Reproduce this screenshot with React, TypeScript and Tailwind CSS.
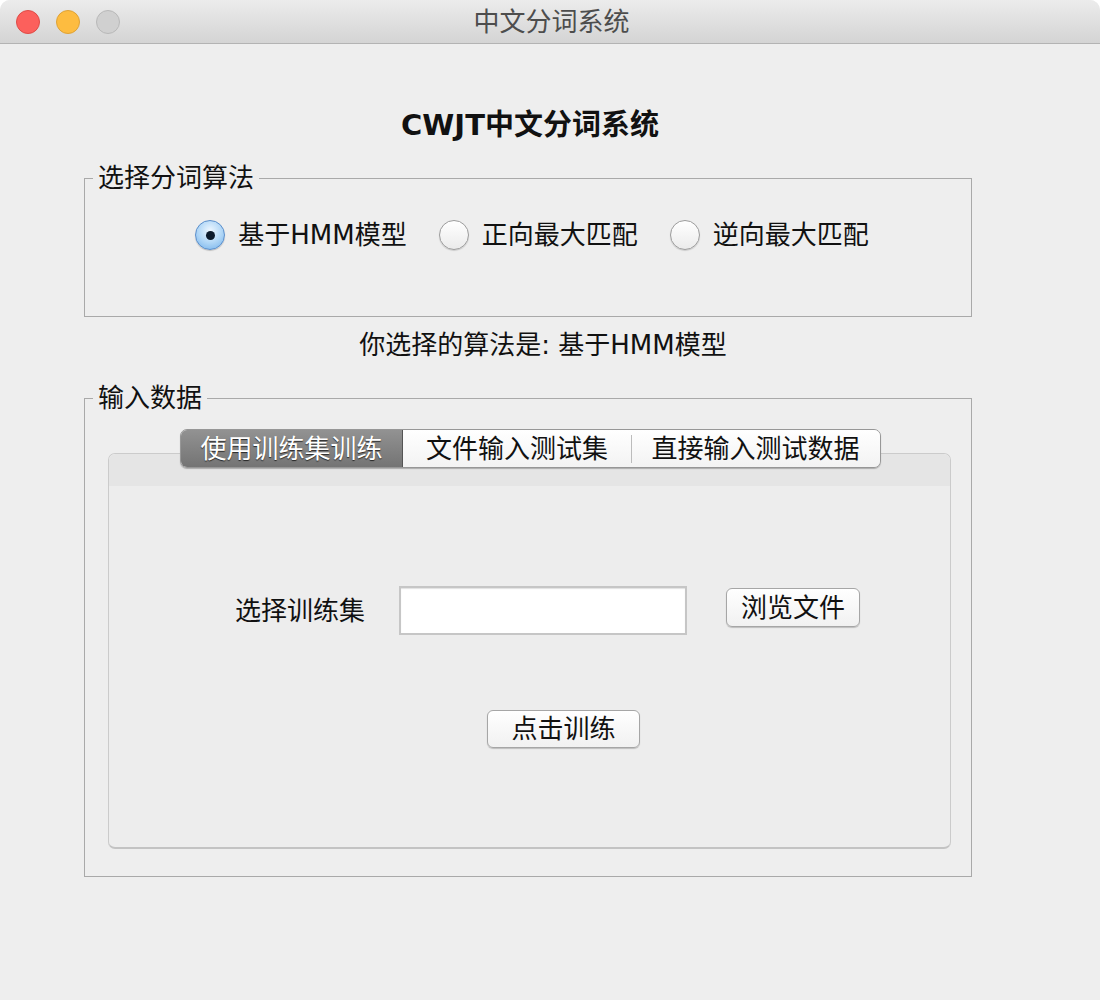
import React, { useState } from 'react';

const algorithms = ['基于HMM模型', '正向最大匹配', '逆向最大匹配'];

const tabs = [
  { label: '使用训练集训练', width: 'w-[222px]' },
  { label: '文件输入测试集', width: 'w-[228px]' },
  { label: '直接输入测试数据', width: 'w-[249px]' },
];

function Radio({ checked }: { checked: boolean }) {
  if (checked) {
    return (
      <span className="w-[30px] h-[30px] rounded-full border border-[#5b8fcc] bg-[radial-gradient(circle_at_50%_35%,#eef7ff_0%,#b3d8f7_50%,#72b0ea_100%)] shadow-[0_1px_1px_rgba(0,0,0,0.2)] flex items-center justify-center shrink-0">
        <span className="w-[9px] h-[9px] rounded-full bg-[#0d1b2c]" />
      </span>
    );
  }
  return (
    <span className="w-[30px] h-[30px] rounded-full border border-[#9c9c9c] bg-gradient-to-b from-white to-[#ebebeb] shadow-[0_1px_1px_rgba(0,0,0,0.15)] shrink-0" />
  );
}

function MacButton({ children, className = '' }: { children: React.ReactNode; className?: string }) {
  return (
    <button
      className={`rounded-[6px] border border-[#a6a6a6] bg-gradient-to-b from-white to-[#f1f1f1] shadow-[0_1px_1px_rgba(0,0,0,0.2)] text-[26px] leading-none text-[#111] flex items-center justify-center ${className}`}
    >
      {children}
    </button>
  );
}

export default function App() {
  const [algo, setAlgo] = useState(0);
  const [tab, setTab] = useState(0);

  return (
    <div className="w-[1100px] h-[1000px] bg-[#eeeeee] rounded-t-[10px] overflow-hidden font-['DejaVu_Sans','Noto_Sans_CJK_SC',sans-serif] text-[#111]">
      {/* window title bar */}
      <div className="h-[44px] relative flex items-center bg-gradient-to-b from-[#ececec] to-[#d4d4d4] border-b border-[#b3b3b3]">
        <div className="flex items-center gap-[16px] pl-[16px]">
          <span className="w-[24px] h-[24px] rounded-full bg-[#fc605c] border border-[#de4b46]" />
          <span className="w-[24px] h-[24px] rounded-full bg-[#fdbc40] border border-[#dea236]" />
          <span className="w-[24px] h-[24px] rounded-full bg-[#d0d0d0] border border-[#b8b8b8]" />
        </div>
        <div className="absolute inset-0 flex items-center justify-center text-[26px] leading-none text-[#4d4d4d] pl-[3px]">
          中文分词系统
        </div>
      </div>

      <h1 className="mt-[64px] text-center text-[29px] leading-[35px] font-bold text-[#111] pr-[40px]">
        CWJT中文分词系统
      </h1>

      {/* algorithm group */}
      <fieldset className="mt-[22px] ml-[84px] w-[888px] border border-[#a9a9a9]">
        <legend className="ml-[8px] px-[5px] text-[26px] leading-[26px]">选择分词算法</legend>
        <div className="h-[125px] pt-[29px]">
          <div className="h-[30px] flex items-center justify-center gap-[32px] pl-[8px]">
            {algorithms.map((a, i) => (
              <label key={a} className="flex items-center gap-[13px] cursor-pointer" onClick={() => setAlgo(i)}>
                <Radio checked={algo === i} />
                <span className="text-[26px] leading-none">{a}</span>
              </label>
            ))}
          </div>
        </div>
      </fieldset>

      <div className="mt-[13px] text-center text-[26px] leading-[30px] pl-[86px] w-[1000px]">
        你选择的算法是: {algorithms[algo]}
      </div>

      {/* input group */}
      <fieldset className="mt-[25px] ml-[84px] w-[888px] border border-[#a9a9a9]">
        <legend className="ml-[8px] px-[5px] text-[26px] leading-[26px]">输入数据</legend>
        <div className="h-[465px] pt-[18px] pl-[23px] pr-[20px]">
          <div className="flex flex-col items-center">
            <div className="relative z-10 h-[39px] flex rounded-[7px] border border-[#979797] shadow-[0_1px_1px_rgba(0,0,0,0.25)] overflow-hidden ml-[2px]">
              {tabs.map((t, i) => (
                <div
                  key={t.label}
                  onClick={() => setTab(i)}
                  className={`${t.width} h-full flex items-center justify-center text-[26px] leading-none cursor-pointer ${
                    tab === i
                      ? 'bg-gradient-to-b from-[#929292] to-[#747474] text-white [text-shadow:0_1px_1px_rgba(0,0,0,0.7)] border-r border-[#555]'
                      : 'bg-gradient-to-b from-white to-[#f3f3f3] text-[#111]'
                  }`}
                >
                  {i === 2 && <span className="w-px h-[28px] bg-[#bcbcbc] mr-auto" />}
                  <span className={i === 2 ? 'mr-auto -ml-px' : ''}>{t.label}</span>
                </div>
              ))}
            </div>

            <div className="-mt-[15px] w-[843px] h-[396px] rounded-[7px] border border-[#cbcbcb] border-b-2 border-b-[#c3c3c3] bg-[#ededed] shadow-[inset_0_1px_0_#fff] overflow-hidden">
              <div className="h-[32px] bg-[#e5e5e5]" />
              <div className="pt-[100px]">
                <div className="h-[49px] flex items-start pl-[126px]">
                  <span className="self-center text-[26px] leading-none">选择训练集</span>
                  <input
                    type="text"
                    className="ml-[34px] w-[288px] h-[49px] bg-white border-2 border-[#c6c6c6] shadow-[inset_0_1px_1px_rgba(0,0,0,0.12)] outline-none px-2 text-[22px]"
                  />
                  <MacButton className="ml-[39px] mt-[2px] w-[134px] h-[39px]">浏览文件</MacButton>
                </div>
                <div className="mt-[75px] pl-[378px]">
                  <MacButton className="w-[153px] h-[38px]">点击训练</MacButton>
                </div>
              </div>
            </div>
          </div>
        </div>
      </fieldset>
    </div>
  );
}
